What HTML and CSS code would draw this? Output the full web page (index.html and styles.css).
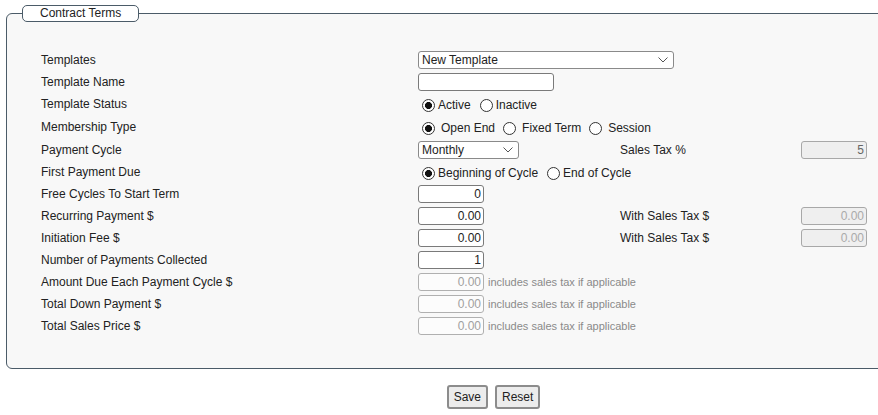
FILE: index.html
```html
<!DOCTYPE html>
<html lang="en">
<head>
  <meta charset="UTF-8" />
  <title>Contract Terms</title>
  <link rel="stylesheet" href="styles.css">
</head>
<body>
<div class="page">
  <fieldset class="terms">
    <legend>Contract Terms</legend>

    <div class="row">
      <label class="lbl">Templates</label>
      <span class="sel-wrap sel-wide">
        <select class="sel"><option>New Template</option></select>
        <svg class="chev" width="10" height="6" viewBox="0 0 10 6"><path d="M0.5 0.5 L5 5 L9.5 0.5" fill="none" stroke="#555" stroke-width="1"/></svg>
      </span>
    </div>
    <div class="row">
      <label class="lbl">Template Name</label>
      <input type="text" class="inp inp-name" />
    </div>
    <div class="row">
      <label class="lbl">Template Status</label>
      <div class="radios">
        <input type="radio" name="status" checked /><span>Active</span>
        <input type="radio" name="status" /><span>Inactive</span>
      </div>
    </div>
    <div class="row row-tall">
      <label class="lbl">Membership Type</label>
      <div class="radios spaced">
        <input type="radio" name="mtype" checked /><span>Open End</span>
        <input type="radio" name="mtype" /><span>Fixed Term</span>
        <input type="radio" name="mtype" /><span>Session</span>
      </div>
    </div>
    <div class="row">
      <label class="lbl">Payment Cycle</label>
      <span class="sel-wrap sel-cycle">
        <select class="sel"><option>Monthly</option></select>
        <svg class="chev" width="10" height="6" viewBox="0 0 10 6"><path d="M0.5 0.5 L5 5 L9.5 0.5" fill="none" stroke="#555" stroke-width="1"/></svg>
      </span>
      <label class="lbl2">Sales Tax %</label>
      <input type="text" class="inp inp-side num tax" value="5" disabled />
    </div>
    <div class="row">
      <label class="lbl">First Payment Due</label>
      <div class="radios">
        <input type="radio" name="due" checked /><span>Beginning of Cycle</span>
        <input type="radio" name="due" /><span>End of Cycle</span>
      </div>
    </div>
    <div class="row">
      <label class="lbl">Free Cycles To Start Term</label>
      <input type="text" class="inp inp-num num" value="0" />
    </div>
    <div class="row">
      <label class="lbl">Recurring Payment $</label>
      <input type="text" class="inp inp-num num" value="0.00" />
      <label class="lbl2">With Sales Tax $</label>
      <input type="text" class="inp inp-side num" value="0.00" disabled />
    </div>
    <div class="row">
      <label class="lbl">Initiation Fee $</label>
      <input type="text" class="inp inp-num num" value="0.00" />
      <label class="lbl2">With Sales Tax $</label>
      <input type="text" class="inp inp-side num" value="0.00" disabled />
    </div>
    <div class="row">
      <label class="lbl">Number of Payments Collected</label>
      <input type="text" class="inp inp-num num" value="1" />
    </div>
    <div class="row">
      <label class="lbl">Amount Due Each Payment Cycle $</label>
      <div class="calc">
        <input type="text" class="inp inp-num num ro" value="0.00" readonly />
        <span class="note">includes sales tax if applicable</span>
      </div>
    </div>
    <div class="row">
      <label class="lbl">Total Down Payment $</label>
      <div class="calc">
        <input type="text" class="inp inp-num num ro" value="0.00" readonly />
        <span class="note">includes sales tax if applicable</span>
      </div>
    </div>
    <div class="row">
      <label class="lbl">Total Sales Price $</label>
      <div class="calc">
        <input type="text" class="inp inp-num num ro" value="0.00" readonly />
        <span class="note">includes sales tax if applicable</span>
      </div>
    </div>
  </fieldset>

  <div class="actions">
    <button class="btn">Save</button>
    <button class="btn">Reset</button>
  </div>
</div>
</body>
</html>
```

FILE: styles.css
```css
html, body {
  margin: 0;
  background: #fff;
  overflow: hidden;
}
body {
  font-family: "Liberation Sans", Arial, sans-serif;
  font-size: 12px;
  color: #222;
}
.page {
  width: 987px;
}
.terms {
  margin: 5px 6px 0 6px;
  padding: 27px 0 31px 34px;
  border: 1px solid #4b5b68;
  border-radius: 6px;
  background: #f8f8f8;
}
.terms legend {
  margin-left: -19px;
  padding: 0 17px 0 17px;
  border: 1px solid #4b5b68;
  border-radius: 5px;
  background: #fff;
  line-height: 15px;
  color: #222;
}
.row {
  display: grid;
  grid-template-columns: 377px 202px 181px 66px;
  align-items: center;
  height: 22px;
}
.row-tall {
  height: 24px;
}
.lbl2 {
  grid-column: 3;
}
.sel-wrap {
  position: relative;
  display: flex;
}
.sel {
  appearance: none;
  -webkit-appearance: none;
  width: 100%;
  height: 18px;
  padding: 0 0 0 3px;
  font: 12px "Liberation Sans", Arial, sans-serif;
  color: #222;
  border: 1px solid #8a8a8a;
  border-radius: 3px;
  background: #fff;
}
.chev {
  position: absolute;
  right: 6px;
  top: 6px;
  pointer-events: none;
}
.sel-wide {
  grid-column: 2 / span 3;
  width: 256px;
}
.sel-cycle {
  width: 101px;
}
.inp {
  box-sizing: border-box;
  height: 18px;
  padding: 0 2px;
  font: 12px "Liberation Sans", Arial, sans-serif;
  color: #222;
  border: 1px solid #7a7a7a;
  border-radius: 3px;
  background: #fff;
}
.inp-name {
  width: 136px;
}
.inp-num {
  width: 66px;
}
.inp-side {
  grid-column: 4;
  width: 66px;
  background: #efefef;
  border-color: #a8a8a8;
  color: #aaa;
}
.tax {
  color: #666;
}
.num {
  text-align: right;
}
.ro {
  border-color: #b0b0b0;
  color: #a0a0a0;
  background: #fcfcfc;
}
.calc {
  grid-column: 2 / span 3;
  display: flex;
  align-items: center;
  gap: 4px;
}
.note {
  font-size: 11px;
  color: #8a8a8a;
}
.radios {
  grid-column: 2 / span 3;
  display: flex;
  align-items: center;
  padding-left: 4px;
  padding-top: 2px;
}
.radios input {
  appearance: none;
  -webkit-appearance: none;
  box-sizing: border-box;
  width: 13px;
  height: 13px;
  margin: 0 3px 0 0;
  border: 1px solid #333;
  border-radius: 50%;
  background: #fff;
}
.radios input:checked {
  background: radial-gradient(circle, #111 0 3.2px, #fff 3.8px);
}
.radios span {
  margin-right: 9px;
}
.spaced input {
  margin-right: 6px;
}
.spaced span {
  margin-right: 8px;
}
.actions {
  display: flex;
  justify-content: center;
  gap: 7px;
  margin-top: 16px;
}
.btn {
  height: 24px;
  padding: 0 5px;
  font: 12px "Liberation Sans", Arial, sans-serif;
  color: #222;
  background: #ececec;
  border: 2px solid #8c8c8c;
  border-radius: 3px;
}
```
